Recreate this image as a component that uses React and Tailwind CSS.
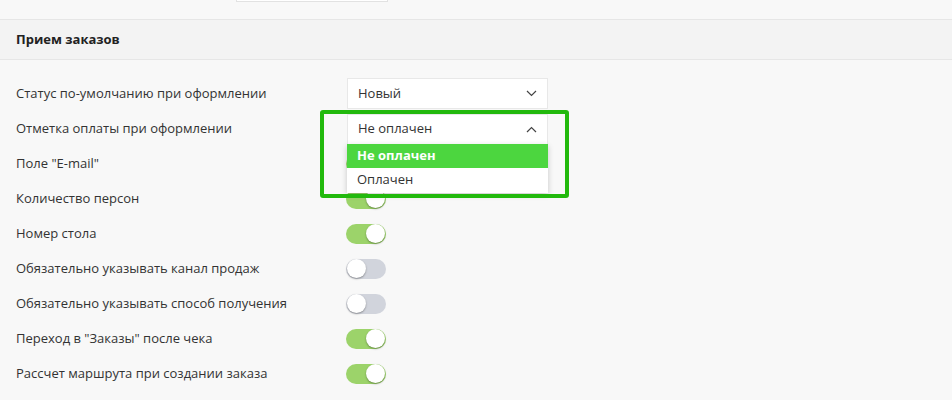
const rows = [
  { label: "Количество персон", on: true },
  { label: "Номер стола", on: true },
  { label: "Обязательно указывать канал продаж", on: false },
  { label: "Обязательно указывать способ получения", on: false },
  { label: 'Переход в "Заказы" после чека', on: true },
  { label: "Рассчет маршрута при создании заказа", on: true },
];

function Chevron({ up }) {
  return (
    <svg width="11" height="7" viewBox="0 0 11 7" className="shrink-0">
      <path
        d={up ? "M1 6 L5.5 1.5 L10 6" : "M1 1 L5.5 5.5 L10 1"}
        fill="none"
        stroke="#444"
        strokeWidth="1.2"
      />
    </svg>
  );
}

function Toggle({ on }) {
  return (
    <div
      className={`flex h-5 w-10 items-center rounded-full px-px ${
        on ? "justify-end bg-[#9cd36a]" : "justify-start bg-[#d1d4dc]"
      }`}
    >
      <div className="h-[19px] w-[19px] rounded-full bg-white shadow-[0_1px_2px_rgba(0,0,0,0.35)]" />
    </div>
  );
}

function Row({ label, children }) {
  return (
    <div className="flex h-[35px] items-center">
      <div className="w-[331px] shrink-0">{label}</div>
      {children}
    </div>
  );
}

export default function App() {
  return (
    <div
      className="h-[400px] w-[952px] overflow-hidden bg-[#f8f8f8] text-[13px] text-[#333]"
      style={{ fontFamily: '"Open Sans", sans-serif' }}
    >
      <div className="h-5 border-b border-[#e6e6e6]">
        <div className="ml-[236px] h-[2px] w-[152px] border-x border-b border-[#e2e2e2] bg-white" />
      </div>
      <div className="flex h-10 items-center border-b border-[#e6e6e6] bg-[#f3f3f3] px-4 font-bold text-[#222]">
        Прием заказов
      </div>
      <div className="px-4 pt-4">
        <Row label="Статус по-умолчанию при оформлении">
          <div className="flex h-[31px] w-[201px] items-center justify-between border border-[#e8e8e8] bg-white pl-[10px] pr-[10px]">
            <span>Новый</span>
            <Chevron />
          </div>
        </Row>
        <Row label="Отметка оплаты при оформлении">
          <div className="relative z-10">
            <div className="flex h-[30px] w-[201px] items-center justify-between border border-b-0 border-[#e8e8e8] bg-white px-[10px]">
              <span>Не оплачен</span>
              <Chevron up />
            </div>
            <div className="absolute left-0 top-[30px] w-[201px] bg-white shadow-[0_2px_6px_rgba(0,0,0,0.2)]">
              <div className="flex h-[24px] items-center bg-[#4cd63f] px-[10px] font-bold text-white">
                Не оплачен
              </div>
              <div className="flex h-[25px] items-center px-[10px]">Оплачен</div>
            </div>
            <div className="pointer-events-none absolute left-[-27px] top-[-4px] h-[88px] w-[249px] rounded-[3px] border-4 border-[#22b90d]" />
          </div>
        </Row>
        <Row label={'Поле "E-mail"'}>
          <div className="ml-[-1px]">
            <Toggle on />
          </div>
        </Row>
        {rows.map((r) => (
          <Row key={r.label} label={r.label}>
            <div className="ml-[-1px]">
              <Toggle on={r.on} />
            </div>
          </Row>
        ))}
      </div>
    </div>
  );
}
